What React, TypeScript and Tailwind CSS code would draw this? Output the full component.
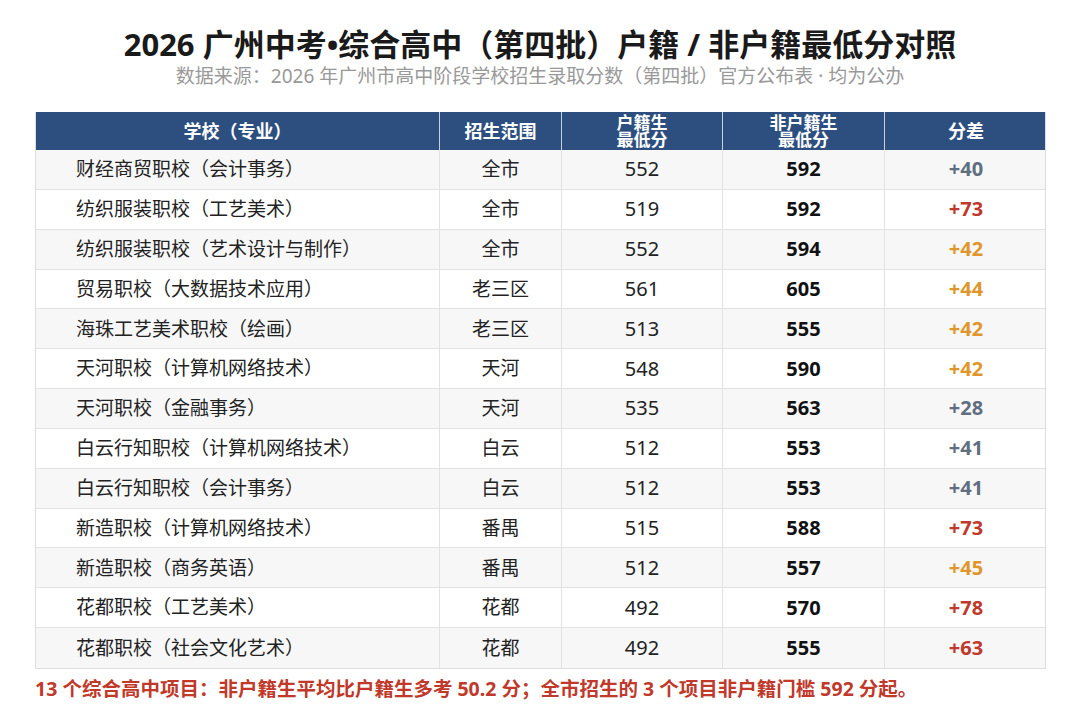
import React from "react";

type Row = { name: string; area: string; hj: number; fhj: number; diff: number; tone: "gray" | "red" | "orange" };

const rows: Row[] = [
  { name: "财经商贸职校（会计事务）", area: "全市", hj: 552, fhj: 592, diff: 40, tone: "gray" },
  { name: "纺织服装职校（工艺美术）", area: "全市", hj: 519, fhj: 592, diff: 73, tone: "red" },
  { name: "纺织服装职校（艺术设计与制作）", area: "全市", hj: 552, fhj: 594, diff: 42, tone: "orange" },
  { name: "贸易职校（大数据技术应用）", area: "老三区", hj: 561, fhj: 605, diff: 44, tone: "orange" },
  { name: "海珠工艺美术职校（绘画）", area: "老三区", hj: 513, fhj: 555, diff: 42, tone: "orange" },
  { name: "天河职校（计算机网络技术）", area: "天河", hj: 548, fhj: 590, diff: 42, tone: "orange" },
  { name: "天河职校（金融事务）", area: "天河", hj: 535, fhj: 563, diff: 28, tone: "gray" },
  { name: "白云行知职校（计算机网络技术）", area: "白云", hj: 512, fhj: 553, diff: 41, tone: "gray" },
  { name: "白云行知职校（会计事务）", area: "白云", hj: 512, fhj: 553, diff: 41, tone: "gray" },
  { name: "新造职校（计算机网络技术）", area: "番禺", hj: 515, fhj: 588, diff: 73, tone: "red" },
  { name: "新造职校（商务英语）", area: "番禺", hj: 512, fhj: 557, diff: 45, tone: "orange" },
  { name: "花都职校（工艺美术）", area: "花都", hj: 492, fhj: 570, diff: 78, tone: "red" },
  { name: "花都职校（社会文化艺术）", area: "花都", hj: 492, fhj: 555, diff: 63, tone: "red" },
];

const toneClass: Record<Row["tone"], string> = {
  gray: "text-[#5f6f80]",
  red: "text-[#c0392b]",
  orange: "text-[#e0962a]",
};

const font = { fontFamily: '"Noto Sans", "Noto Sans CJK SC", sans-serif' };

export default function App() {
  return (
    <div className="w-[1080px] h-[725px] bg-white overflow-hidden" style={font}>
      <div className="pt-[24px] flex flex-col items-center">
        <h1 className="text-[31px] leading-[40px] font-bold text-[#1a1a1a]">
          2026 广州中考•综合高中（第四批）户籍 / 非户籍最低分对照
        </h1>
        <p className="text-[19px] leading-[24px] text-[#999999]">
          数据来源：2026 年广州市高中阶段学校招生录取分数（第四批）官方公布表 · 均为公办
        </p>
      </div>

      <div className="ml-[35px] w-[1011px] mt-[24px] border-x border-b border-[#dddddd]">
        <div className="grid grid-cols-[404px_122px_161px_162px_162px] h-[38px] bg-[#2d4f80] text-white font-bold text-[18px]">
          <div className="flex items-center justify-center border-r border-[#c8d0dc]">学校（专业）</div>
          <div className="flex items-center justify-center border-r border-[#c8d0dc]">招生范围</div>
          <div className="flex flex-col items-center justify-center text-[17px] leading-[17px] border-r border-[#c8d0dc]">
            <span>户籍生</span>
            <span>最低分</span>
          </div>
          <div className="flex flex-col items-center justify-center text-[17px] leading-[17px] border-r border-[#c8d0dc]">
            <span>非户籍生</span>
            <span>最低分</span>
          </div>
          <div className="flex items-center justify-center">分差</div>
        </div>
        {rows.map((r, i) => (
          <div
            key={i}
            className={`grid grid-cols-[404px_122px_161px_162px_162px] h-[39.85px] text-[19px] text-[#222222] ${
              i % 2 === 0 ? "bg-[#f7f7f8]" : "bg-white"
            } ${i < rows.length - 1 ? "border-b border-[#e2e2e2]" : ""}`}
          >
            <div className="flex items-center pl-[40px] border-r border-[#e2e2e2]">{r.name}</div>
            <div className="flex items-center justify-center border-r border-[#e2e2e2]">{r.area}</div>
            <div className="flex items-center justify-center border-r border-[#e2e2e2] text-[20px]">{r.hj}</div>
            <div className="flex items-center justify-center border-r border-[#e2e2e2] font-bold text-[20px] text-[#111111]">{r.fhj}</div>
            <div className={`flex items-center justify-center font-bold text-[20px] ${toneClass[r.tone]}`}>+{r.diff}</div>
          </div>
        ))}
      </div>

      <p className="ml-[35px] mt-[8px] text-[19.5px] leading-[24px] font-bold text-[#c0392b] whitespace-nowrap">
        13 个综合高中项目：非户籍生平均比户籍生多考 50.2 分；全市招生的 3 个项目非户籍门槛 592 分起。
      </p>
    </div>
  );
}
